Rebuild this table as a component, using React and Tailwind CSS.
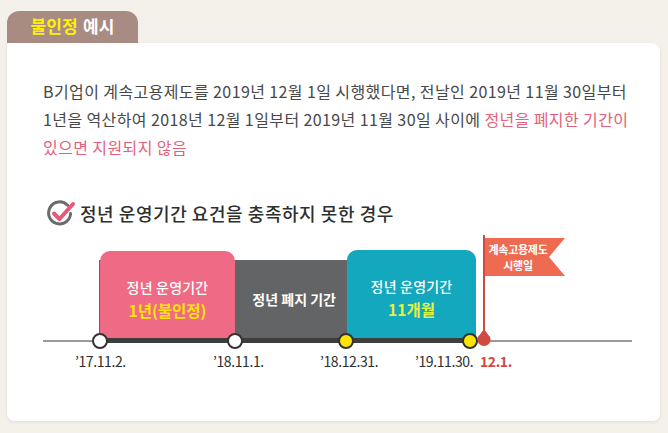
import React from "react";

const FONT = { fontFamily: '"Noto Sans CJK KR", "Noto Sans", sans-serif' };

function CheckIcon() {
  return (
    <svg width="30" height="28" viewBox="0 0 30 28" className="shrink-0">
      <path d="M20.5 6.2 A11 11 0 1 0 23.6 14.5" fill="none" stroke="#6b6b6b" strokeWidth="3" strokeLinecap="round" />
      <path d="M7 14.5 L12.5 20 L26 5" fill="none" stroke="#e8587a" strokeWidth="4" strokeLinecap="round" strokeLinejoin="round" />
    </svg>
  );
}

function Dot({ x, yellow }) {
  return (
    <div
      className={`absolute top-[101px] w-[16px] h-[16px] rounded-full border-[2.5px] border-[#333] ${yellow ? "bg-[#ffe600]" : "bg-white"}`}
      style={{ left: x - 8 }}
    />
  );
}

export default function App() {
  return (
    <div className="w-[668px] h-[433px] bg-[#f4f0ea] pt-[11px] pl-[7px] pr-[8px]" style={FONT}>
      <div className="w-[131px] h-[32px] rounded-t-[12px] bg-[#a88c83] flex items-center justify-center text-[17px] font-bold tracking-[0.2px] pb-[3px]">
        <span className="text-[#fff200]">불인정</span>
        <span className="text-white ml-[5px]">예시</span>
      </div>
      <div className="h-[378px] bg-white rounded-b-[7px] rounded-tr-[8px] shadow-[0_1px_3px_rgba(150,130,110,0.18)] pl-[36px] pr-[10px] pt-[34px]">
        <p className="text-[16px] leading-[28px] text-[#484848] tracking-[0.4px] whitespace-nowrap">
          B기업이 계속고용제도를 2019년 12월 1일 시행했다면, 전날인 2019년 11월 30일부터
          <br />
          1년을 역산하여 2018년 12월 1일부터 2019년 11월 30일 사이에{" "}
          <span className="text-[#e4607c]">정년을 폐지한 기간이</span>
          <br />
          <span className="text-[#e4607c]">있으면 지원되지 않음</span>
        </p>

        <div className="mt-[38px] ml-[4px] flex items-center gap-[3px] h-[28px]">
          <CheckIcon />
          <span className="text-[18px] text-[#2f2f2f] tracking-[0.55px] font-medium">정년 운영기간 요건을 충족하지 못한 경우</span>
        </div>

        <div className="relative mt-[5px] w-[589px] h-[140px]">
          <div className="absolute left-0 top-[108px] w-[589px] h-[2px] bg-[#9a9a9a]" />
          <div className="absolute left-[56px] top-[28px] w-[252px] h-[81px] bg-[#636466] flex items-center justify-end pr-[10px] pb-[2px]">
            <span className="text-white font-bold text-[14px] tracking-[0px] mr-[5px]">정년 폐지 기간</span>
          </div>
          <div className="absolute left-[57px] top-[19px] w-[135px] h-[90px] rounded-t-[10px] bg-[#ef6b85] flex flex-col items-center justify-center pt-[5px] leading-[23px]">
            <span className="text-white text-[14px] tracking-[0.2px] font-medium">정년 운영기간</span>
            <span className="text-[#ffe600] text-[15.5px] font-bold tracking-[0px]">1년(불인정)</span>
          </div>
          <div className="absolute left-[304px] top-[18px] w-[129px] h-[91px] rounded-t-[10px] bg-[#13a8bd] flex flex-col items-center justify-center pt-[5px] leading-[23px]">
            <span className="text-white text-[14px] tracking-[0.2px] font-medium">정년 운영기간</span>
            <span className="text-[#e4f33c] text-[15.5px] font-bold tracking-[0px]">11개월</span>
          </div>
          <div className="absolute left-[57px] top-[106px] w-[370px] h-[5px] bg-[#3d3d3d]" />
          <Dot x={57} />
          <Dot x={192} />
          <Dot x={303} yellow />
          <Dot x={427} yellow />

          <div className="absolute left-[440px] top-[3px] w-[2px] h-[104px] bg-[#d04a44]" />
          <svg className="absolute left-[433px] top-[96px]" width="16" height="20" viewBox="0 0 16 20">
            <path d="M8 1 L12 6.5 A6.5 6.5 0 1 1 4 6.5 Z" fill="#cf4a43" />
          </svg>
          <div className="absolute left-[442px] top-[6px] w-[80px] h-[38px]">
            <svg className="absolute inset-0" width="80" height="38" viewBox="0 0 80 38">
              <polygon points="0,0 80,0 64,19 80,38 0,38" fill="#ee6a50" />
            </svg>
            <div className="relative w-[66px] h-[38px] flex flex-col items-center justify-center text-white text-[11px] font-bold leading-[16px] tracking-[-0.3px]">
              <span>계속고용제도</span>
              <span>시행일</span>
            </div>
          </div>

          <div className="absolute top-[120px] left-0 w-[589px] h-[18px] text-[14px] leading-[18px] text-[#2f2f2f] tracking-[-0.4px]">
            <span className="absolute left-[32px]">’17.11.2.</span>
            <span className="absolute left-[170px]">’18.11.1.</span>
            <span className="absolute left-[277px]">’18.12.31.</span>
            <span className="absolute left-[372px]">’19.11.30.</span>
            <span className="absolute left-[437px] text-[#d04a44] font-semibold">12.1.</span>
          </div>
        </div>
      </div>
    </div>
  );
}
